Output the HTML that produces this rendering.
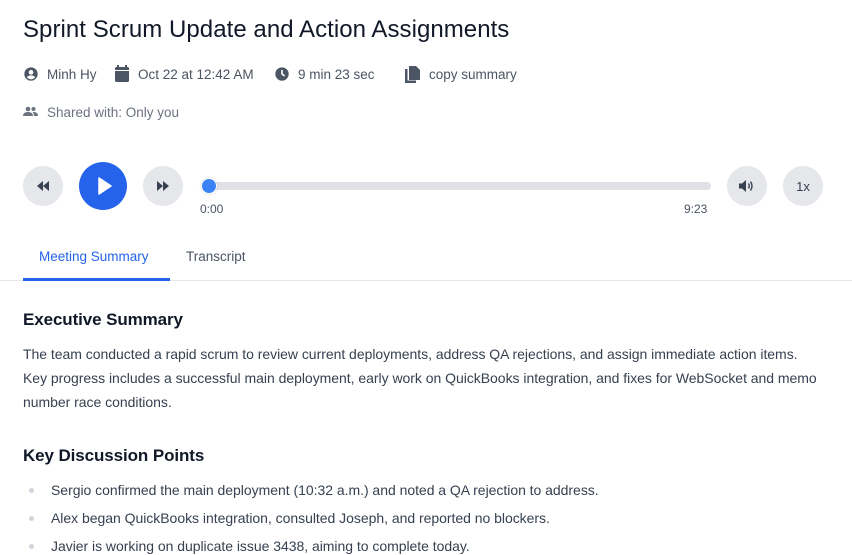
<!DOCTYPE html>
<html><head><meta charset="utf-8"><style>
*{margin:0;padding:0;box-sizing:border-box}
body{width:852px;height:555px;overflow:hidden;background:#fff;font-family:"Liberation Sans",Arial,sans-serif;position:relative;color:#111827}
.abs{position:absolute;white-space:nowrap}
.meta{font-size:13.5px;color:#4b5563}
.btn{position:absolute;border-radius:50%;background:#e5e7eb;display:flex;align-items:center;justify-content:center}
.p{font-size:14px;color:#374151;letter-spacing:-0.03px}
h2{position:absolute;font-size:17px;font-weight:bold;color:#111827;white-space:nowrap;letter-spacing:-0.1px}
.dot{position:absolute;width:5px;height:5px;border-radius:50%;background:#d1d5db}
</style></head><body>
<div class="abs" style="left:23px;top:16px;font-size:24px;color:#111827;letter-spacing:0.05px">Sprint Scrum Update and Action Assignments</div>

<svg class="abs" style="left:23px;top:66px" width="16" height="16" viewBox="0 0 24 24"><path fill="#4b5563" d="M12 2a10 10 0 100 20 10 10 0 000-20zm0 4a3.5 3.5 0 110 7 3.5 3.5 0 010-7zm0 14c-2.6 0-4.9-1.3-6.3-3.3 1.5-1.8 3.9-2.7 6.3-2.7s4.8.9 6.3 2.7C16.9 18.7 14.6 20 12 20z"/></svg>
<div class="abs meta" style="left:47px;top:67px">Minh Hy</div>
<svg class="abs" style="left:114px;top:65px" width="16" height="17" viewBox="0 0 16 17"><rect x="3" y="0" width="2" height="3" fill="#4b5563"/><rect x="11" y="0" width="2" height="3" fill="#4b5563"/><rect x="1" y="2" width="14" height="15" rx="1.5" fill="#4b5563"/><rect x="1" y="5" width="14" height="1" fill="#fff"/></svg>
<div class="abs meta" style="left:138px;top:67px">Oct 22 at 12:42 AM</div>
<svg class="abs" style="left:274px;top:66px" width="16" height="16" viewBox="0 0 24 24"><circle cx="12" cy="12" r="10" fill="#4b5563"/><path d="M12 6v6l4 3" stroke="#fff" stroke-width="2.4" fill="none"/></svg>
<div class="abs meta" style="left:298px;top:67px">9 min 23 sec</div>
<svg class="abs" style="left:405px;top:66px" width="15" height="17" viewBox="0 0 15 17"><rect x="0" y="3" width="2.5" height="14" fill="#4b5563"/><rect x="0" y="14.5" width="11" height="2.5" fill="#4b5563"/><path d="M4 0h7l4 4v10H4z" fill="#4b5563"/></svg>
<div class="abs meta" style="left:429px;top:67px">copy summary</div>

<svg class="abs" style="left:23px;top:106px" width="15" height="11" viewBox="0 0 15 11"><circle cx="5" cy="3" r="2.3" fill="#6b7280"/><circle cx="10.5" cy="3" r="2" fill="#6b7280"/><path d="M0 10c0-3 2.5-4 5-4s5 1 5 4z M10.5 6c2.5 0 4.5 1 4.5 4h-4c0-2-0.5-3-1.5-3.8z" fill="#6b7280"/></svg>
<div class="abs meta" style="left:47px;top:105px;color:#6b7280">Shared with: Only you</div>

<div class="btn" style="left:23px;top:166px;width:40px;height:40px"><svg width="12" height="10" viewBox="0 0 12 10"><path d="M6 0v10L0 5zM12 0v10L6 5z" fill="#374151"/></svg></div>
<div class="btn" style="left:79px;top:162px;width:48px;height:48px;background:#2563eb"><svg width="14" height="18" viewBox="0 0 14 18" style="margin-left:3px"><path d="M1 1v16l12-8z" fill="#fff" stroke="#fff" stroke-linejoin="round" stroke-width="1.5"/></svg></div>
<div class="btn" style="left:143px;top:166px;width:40px;height:40px"><svg width="12" height="10" viewBox="0 0 12 10"><path d="M0 0v10l6-5zM6 0v10l6-5z" fill="#374151"/></svg></div>

<div class="abs" style="left:203px;top:182px;width:508px;height:8px;border-radius:4px;background:#e0e1e6"></div>
<div class="abs" style="left:201px;top:178px;width:16px;height:16px;border-radius:50%;background:#3b82f6;border:1.5px solid #fff;box-shadow:0 0 2px rgba(0,0,0,.2)"></div>
<div class="abs" style="left:200px;top:202px;font-size:12px;color:#4b5563">0:00</div>
<div class="abs" style="left:684px;top:202px;font-size:12px;color:#4b5563">9:23</div>

<div class="btn" style="left:727px;top:166px;width:40px;height:40px"><svg width="16" height="14" viewBox="0 0 16 14"><path d="M0 4.5h3L7 1v12L3 9.5H0z" fill="#374151"/><path d="M9.5 4.5q1.5 2.5 0 5M11.5 2.5q3 4.5 0 9" stroke="#374151" stroke-width="1.4" fill="none"/></svg></div>
<div class="btn" style="left:783px;top:166px;width:40px;height:40px;font-size:13px;color:#374151">1x</div>

<div class="abs" style="left:39px;top:249px;font-size:13.5px;color:#2563eb">Meeting Summary</div>
<div class="abs" style="left:186px;top:249px;font-size:13.5px;color:#4b5563">Transcript</div>
<div class="abs" style="left:0;top:280px;width:852px;height:1px;background:#e5e7eb"></div>
<div class="abs" style="left:23px;top:278px;width:147px;height:3px;background:#2563eb"></div>

<h2 style="left:23px;top:310px">Executive Summary</h2>
<div class="abs p" style="left:23px;top:346px">The team conducted a rapid scrum to review current deployments, address QA rejections, and assign immediate action items.</div>
<div class="abs p" style="left:23px;top:370px">Key progress includes a successful main deployment, early work on QuickBooks integration, and fixes for WebSocket and memo</div>
<div class="abs p" style="left:23px;top:394px">number race conditions.</div>

<h2 style="left:23px;top:446px">Key Discussion Points</h2>
<div class="dot" style="left:29px;top:488px"></div>
<div class="abs p" style="left:51px;top:482px">Sergio confirmed the main deployment (10:32 a.m.) and noted a QA rejection to address.</div>
<div class="dot" style="left:29px;top:516px"></div>
<div class="abs p" style="left:51px;top:510px">Alex began QuickBooks integration, consulted Joseph, and reported no blockers.</div>
<div class="dot" style="left:29px;top:544px"></div>
<div class="abs p" style="left:51px;top:538px">Javier is working on duplicate issue 3438, aiming to complete today.</div>
</body></html>
